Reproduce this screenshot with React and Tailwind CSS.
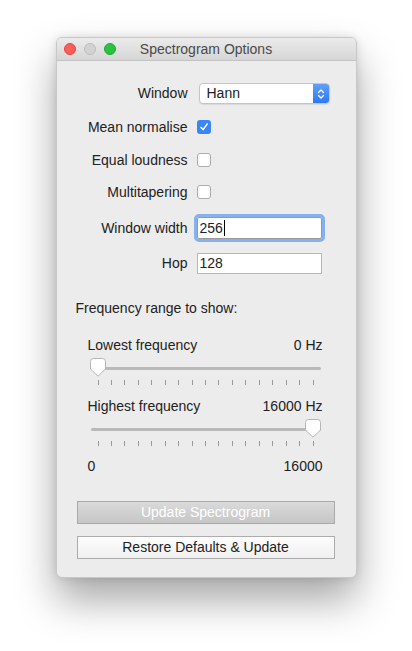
import React from "react";

const ticks = Array.from({ length: 17 }, (_, i) => i);

function Thumb({ left }) {
  return (
    <svg
      className="absolute top-0"
      style={{ left }}
      width="16"
      height="19"
      viewBox="0 0 16 19"
    >
      <path
        d="M3.5 0.5 H12.5 Q15.5 0.5 15.5 3.5 V11 L8 18.2 L0.5 11 V3.5 Q0.5 0.5 3.5 0.5 Z"
        fill="#ffffff"
        stroke="#b5b5b5"
        strokeWidth="1"
      />
    </svg>
  );
}

function Slider({ value }) {
  // track spans 230px, thumb centres between 7px and 222px
  const pos = 7 + value * 215 - 8;
  return (
    <div className="relative ml-[34px] w-[230px] h-[28px]">
      <div className="absolute left-0 right-0 top-[9px] h-[3px] rounded-full bg-[#b9b9b9]" />
      <div className="absolute left-[7px] w-[216px] top-[22px] flex justify-between">
        {ticks.map((t) => (
          <div key={t} className="w-px h-[5px] bg-[#9a9a9a]" />
        ))}
      </div>
      <Thumb left={pos} />
    </div>
  );
}

function Checkbox({ checked }) {
  if (checked) {
    return (
      <div className="w-[14px] h-[14px] rounded-[3px] bg-[#3a85f7] flex items-center justify-center">
        <svg width="10" height="10" viewBox="0 0 10 10">
          <path d="M2 5.4 L4.1 7.6 L8.2 2" fill="none" stroke="#fff" strokeWidth="1.5" strokeLinecap="round" strokeLinejoin="round" />
        </svg>
      </div>
    );
  }
  return <div className="w-[14px] h-[14px] rounded-[3px] bg-white border border-[#acacac]" />;
}

function Row({ label, children, className }) {
  return (
    <div className={"flex items-center " + className}>
      <div className="w-[131px] text-right">{label}</div>
      <div className="ml-[9px] flex items-center">{children}</div>
    </div>
  );
}

export default function App() {
  return (
    <div className="min-h-[651px] bg-white pt-[37px] text-[14px] text-[#222222]" style={{ fontFamily: '"Liberation Sans", Arial, sans-serif' }}>
      <div className="mx-auto w-[301px] rounded-[6px] bg-[#ececec] border border-[#c8c8c8] shadow-[0_22px_40px_rgba(0,0,0,0.35),0_0_8px_rgba(0,0,0,0.12)] overflow-hidden">
        <div className="relative h-[23px] flex items-center justify-center bg-gradient-to-b from-[#ebebeb] to-[#d6d6d6] border-b border-[#c2c2c2]">
          <div className="absolute left-[7px] top-[5px] flex gap-[8px]">
            <div className="w-[12px] h-[12px] rounded-full bg-[#fc5f57] border border-[#e1463f]" />
            <div className="w-[12px] h-[12px] rounded-full bg-[#d2d2d2] border border-[#bdbdbd]" />
            <div className="w-[12px] h-[12px] rounded-full bg-[#29c33f] border border-[#1ea930]" />
          </div>
          <span className="text-[#4a4a4a]">Spectrogram Options</span>
        </div>

        <Row label="Window" className="mt-[22px] h-[21px]">
          <div className="ml-[2px] w-[131px] h-[21px] flex rounded-[4px] bg-white border border-[#c5c5c5] overflow-hidden shadow-[0_1px_1px_rgba(0,0,0,0.08)]">
            <div className="flex-1 pl-[7px] leading-[19px]">Hann</div>
            <div className="w-[16px] bg-gradient-to-b from-[#5fa0fa] to-[#2b78f2] flex items-center justify-center">
              <svg width="8" height="12" viewBox="0 0 8 12">
                <path d="M1.5 4.5 L4 2 L6.5 4.5 M1.5 7.5 L4 10 L6.5 7.5" fill="none" stroke="#fff" strokeWidth="1.3" strokeLinecap="round" strokeLinejoin="round" />
              </svg>
            </div>
          </div>
        </Row>

        <Row label="Mean normalise" className="mt-[13px] h-[20px]">
          <Checkbox checked />
        </Row>
        <Row label="Equal loudness" className="mt-[13px] h-[20px]">
          <Checkbox />
        </Row>
        <Row label="Multitapering" className="mt-[12px] h-[20px]">
          <Checkbox />
        </Row>

        <Row label="Window width" className="mt-[15px] h-[22px]">
          <div className="w-[125px] h-[22px] bg-white border border-[#9a9a9a] rounded-[2px] outline outline-[3px] outline-[#86b1ef] pl-[2px] leading-[20px] flex items-center">
            256<span className="inline-block w-px h-[16px] bg-black ml-px" />
          </div>
        </Row>
        <Row label="Hop" className="mt-[14px] h-[21px]">
          <div className="w-[125px] h-[21px] bg-white border border-[#b8b8b8] pl-[2px] leading-[19px]">128</div>
        </Row>

        <div className="mt-[26px] ml-[19px] h-[16px] leading-[16px]">Frequency range to show:</div>

        <div className="mt-[21px] ml-[31px] w-[235px] h-[16px] leading-[16px] flex justify-between">
          <span>Lowest frequency</span>
          <span>0 Hz</span>
        </div>
        <div className="mt-[5px]">
          <Slider value={0} />
        </div>

        <div className="mt-[12px] ml-[31px] w-[235px] h-[16px] leading-[16px] flex justify-between">
          <span>Highest frequency</span>
          <span>16000 Hz</span>
        </div>
        <div className="mt-[5px]">
          <Slider value={1} />
        </div>

        <div className="mt-[11px] ml-[31px] w-[235px] h-[16px] leading-[16px] flex justify-between">
          <span>0</span>
          <span>16000</span>
        </div>

        <div className="mt-[27px] ml-[20px] w-[258px] flex flex-col gap-[12px] pb-[18px]">
          <button className="h-[23px] w-full bg-gradient-to-b from-[#dadada] to-[#c6c6c6] border border-[#a9a9a9] text-white">
            Update Spectrogram
          </button>
          <button className="h-[23px] w-full bg-gradient-to-b from-[#fdfdfd] to-[#f0f0f0] border border-[#acacac] text-[#222222]">
            Restore Defaults &amp; Update
          </button>
        </div>
      </div>
    </div>
  );
}
